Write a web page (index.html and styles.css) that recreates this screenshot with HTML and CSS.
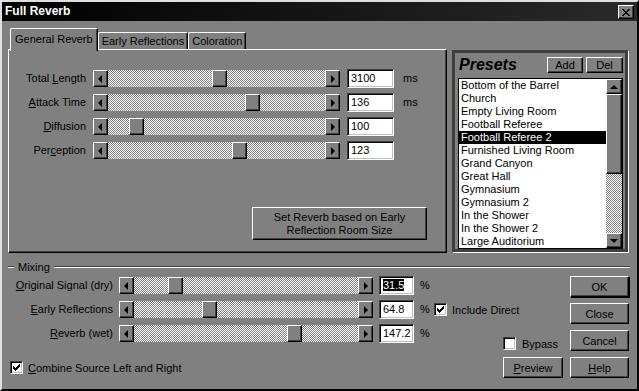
FILE: index.html
```html
<!DOCTYPE html>
<html lang="en">
<head>
    <meta charset="UTF-8">
    <title>Full Reverb</title>
    <link rel="stylesheet" href="styles.css">
</head>
<body>

<div class="window">
    <!-- title bar -->
    <div class="titlebar">
        <span class="title">Full Reverb</span>
        <button class="close-button" aria-label="Close">
            <svg width="8" height="7" viewBox="0 0 8 7" shape-rendering="crispEdges"><path d="M0 0h2v1H0zM6 0h2v1H6zM1 1h2v1H1zM5 1h2v1H5zM2 2h4v1H2zM3 3h2v1H3zM2 4h4v1H2zM1 5h2v1H1zM5 5h2v1H5zM0 6h2v1H0zM6 6h2v1H6z"/></svg>
        </button>
    </div>

    <div class="top">
        <!-- tabs -->
        <div class="tabs-area">
            <div class="tabs">
                <div class="tab active">General Reverb</div>
                <div class="tab">Early Reflections</div>
                <div class="tab">Coloration</div>
            </div>
            <div class="tab-panel">
                <div class="params">
                    <label class="param-label">Total <u>L</u>ength</label>
                    <div class="slider">
                        <span class="arrow-btn left"></span>
                        <span class="track"><span class="thumb" style="left: 104px"></span></span>
                        <span class="arrow-btn right"></span>
                    </div>
                    <div class="field">3100</div>
                    <span class="unit">ms</span>

                    <label class="param-label"><u>A</u>ttack Time</label>
                    <div class="slider">
                        <span class="arrow-btn left"></span>
                        <span class="track"><span class="thumb" style="left: 137px"></span></span>
                        <span class="arrow-btn right"></span>
                    </div>
                    <div class="field">136</div>
                    <span class="unit">ms</span>

                    <label class="param-label"><u>D</u>iffusion</label>
                    <div class="slider">
                        <span class="arrow-btn left"></span>
                        <span class="track"><span class="thumb" style="left: 21px"></span></span>
                        <span class="arrow-btn right"></span>
                    </div>
                    <div class="field">100</div>
                    <span class="unit"></span>

                    <label class="param-label">Per<u>c</u>eption</label>
                    <div class="slider">
                        <span class="arrow-btn left"></span>
                        <span class="track"><span class="thumb" style="left: 124px"></span></span>
                        <span class="arrow-btn right"></span>
                    </div>
                    <div class="field">123</div>
                    <span class="unit"></span>
                </div>
                <button class="btn set-reverb">Set Reverb based on Early<br>Reflection Room Size</button>
            </div>
        </div>

        <!-- presets -->
        <div class="presets">
            <div class="presets-head">
                <span class="presets-title">Presets</span>
                <button class="btn small add">Add</button>
                <button class="btn small del">Del</button>
            </div>
            <div class="listbox">
                <ul class="list">
                    <li>Bottom of the Barrel</li>
                    <li>Church</li>
                    <li>Empty Living Room</li>
                    <li>Football Referee</li>
                    <li class="selected">Football Referee 2</li>
                    <li>Furnished Living Room</li>
                    <li>Grand Canyon</li>
                    <li>Great Hall</li>
                    <li>Gymnasium</li>
                    <li>Gymnasium 2</li>
                    <li>In the Shower</li>
                    <li>In the Shower 2</li>
                    <li>Large Auditorium</li>
                </ul>
                <div class="vscroll">
                    <span class="scroll-btn up"></span>
                    <span class="scroll-thumb"></span>
                    <span class="scroll-track"></span>
                    <span class="scroll-btn down"></span>
                </div>
            </div>
        </div>
    </div>

    <!-- mixing -->
    <div class="mixing">
        <div class="group-title"><span>Mixing</span></div>
        <div class="mix-body">
            <div class="mix-left">
                <div class="mix-grid">
                    <label class="param-label"><u>O</u>riginal Signal (dry)</label>
                    <div class="slider">
                        <span class="arrow-btn left"></span>
                        <span class="track"><span class="thumb" style="left: 34px"></span></span>
                        <span class="arrow-btn right"></span>
                    </div>
                    <div class="field"><span class="selection">31.5</span></div>
                    <span class="unit">%</span>
                    <span></span>

                    <label class="param-label"><u>E</u>arly Reflections</label>
                    <div class="slider">
                        <span class="arrow-btn left"></span>
                        <span class="track"><span class="thumb" style="left: 68px"></span></span>
                        <span class="arrow-btn right"></span>
                    </div>
                    <div class="field">64.8</div>
                    <span class="unit">%</span>
                    <label class="check-row">
                        <span class="checkbox checked"></span>Include Direct
                    </label>

                    <label class="param-label"><u>R</u>everb (wet)</label>
                    <div class="slider">
                        <span class="arrow-btn left"></span>
                        <span class="track"><span class="thumb" style="left: 153px"></span></span>
                        <span class="arrow-btn right"></span>
                    </div>
                    <div class="field">147.2</div>
                    <span class="unit">%</span>
                    <span></span>
                </div>
                <label class="check-row combine">
                    <span class="checkbox checked"></span><span><u>C</u>ombine Source Left and Right</span>
                </label>
            </div>

            <div class="mix-right">
                <div class="side-col">
                    <label class="check-row bypass">
                        <span class="checkbox"></span>Bypass
                    </label>
                    <button class="btn action"><u>P</u>review</button>
                </div>
                <div class="btn-col">
                    <button class="btn action default">OK</button>
                    <button class="btn action">Close</button>
                    <button class="btn action">Cancel</button>
                    <button class="btn action"><u>H</u>elp</button>
                </div>
            </div>
        </div>
    </div>
</div>

</body>
</html>
```

FILE: styles.css
```css
/* page */
body {
    margin: 0;
    background: #808080;
    font-family: "Liberation Sans", Arial, sans-serif;
    font-size: 11px;
    color: #000;
    overflow: hidden;
}

u {
    text-decoration-thickness: 1px;
    text-underline-offset: 1px;
}

.window {
    width: 639px;
    height: 391px;
    box-sizing: border-box;
    border: 2px solid;
    border-color: #dfdfdf #000 #000 #dfdfdf;
    background: #808080;
}

/* title bar */
.titlebar {
    height: 19px;
    display: flex;
    align-items: flex-start;
    background: linear-gradient(to right, #000, #2a2a2a);
    padding-left: 3px;
}

.title {
    font: bold 12px "Liberation Sans", Arial, sans-serif;
    color: #fff;
    line-height: 19px;
}

.close-button {
    margin: 3px 3px 0 auto;
    width: 16px;
    height: 14px;
    padding: 0;
    box-sizing: border-box;
    background: #808080;
    border: 1px solid;
    border-color: #fff #000 #000 #fff;
    box-shadow: inset -1px -1px #404040;
    display: flex;
    align-items: center;
    justify-content: center;
}

/* 3d bevels */
.btn, .arrow-btn, .thumb, .scroll-btn, .scroll-thumb {
    background: #808080;
    box-sizing: border-box;
    border: 1px solid;
    border-color: #fff #000 #000 #fff;
    box-shadow: inset -1px -1px #404040;
}

.btn {
    font: inherit;
    color: #000;
    padding: 0;
    cursor: pointer;
}

/* top area */
.top {
    display: flex;
    padding: 7px 0 0 6px;
}

.tabs-area {
    width: 439px;
}

.tabs {
    display: flex;
    align-items: flex-end;
    height: 21px;
    padding-left: 2px;
}

.tab {
    height: 17px;
    box-sizing: border-box;
    border: 1px solid;
    border-color: #fff #000 transparent #fff;
    border-bottom: none;
    border-radius: 2px 2px 0 0;
    box-shadow: inset -1px 0 #404040;
    padding: 0 3px;
    line-height: 17px;
    white-space: nowrap;
}

.tab.active {
    height: 23px;
    margin-bottom: -2px;
    position: relative;
    z-index: 1;
    background: #808080;
    padding: 0 4px;
    line-height: 20px;
}

.tab-panel {
    height: 204px;
    box-sizing: border-box;
    border: 1px solid;
    border-color: #fff #000 #000 #fff;
    box-shadow: inset -1px -1px #404040;
    padding-top: 19px;
}

.params {
    display: grid;
    grid-template-columns: 77px 247px 47px auto;
    grid-auto-rows: 19px;
    column-gap: 7px;
    row-gap: 5px;
}

.param-label {
    text-align: right;
    line-height: 19px;
    white-space: nowrap;
}

.unit {
    line-height: 19px;
    margin-left: 2px;
}

/* slider */
.slider {
    display: flex;
    height: 17px;
    align-self: center;
}

.arrow-btn {
    width: 15px;
    height: 17px;
    display: flex;
    align-items: center;
    justify-content: center;
}

.arrow-btn::after {
    content: "";
    border-top: 4px solid transparent;
    border-bottom: 4px solid transparent;
}

.arrow-btn.left::after {
    border-right: 4px solid #000;
    margin-right: 1px;
}

.arrow-btn.right::after {
    border-left: 4px solid #000;
}

.track {
    flex: 1;
    position: relative;
    background-image: repeating-conic-gradient(#fff 0 25%, #808080 0 50%);
    background-size: 2px 2px;
}

.thumb {
    position: absolute;
    top: 0;
    width: 15px;
    height: 17px;
}

/* text fields */
.field {
    height: 19px;
    box-sizing: border-box;
    background: #fff;
    border: 1px solid;
    border-color: #404040 #fff #fff #404040;
    box-shadow: inset 1px 1px #000, inset -1px -1px #c0c0c0;
    padding-left: 3px;
    line-height: 17px;
}

.selection {
    background: #000;
    color: #fff;
}

.set-reverb {
    display: block;
    width: 175px;
    height: 33px;
    margin: 47px 19px 0 auto;
    line-height: 13px;
}

/* presets */
.presets {
    width: 176px;
    height: 202px;
    box-sizing: border-box;
    margin: 22px 0 0 5px;
    border: 3px solid #404040;
    box-shadow: 1px 1px #fff;
    padding: 4px 2px 0 3px;
}

.presets-head {
    display: flex;
    align-items: center;
    height: 16px;
    gap: 3px;
}

.presets-title {
    font: italic bold 16px "Liberation Sans", Arial, sans-serif;
    margin: 0 auto 0 1px;
}

.btn.small {
    height: 16px;
    line-height: 14px;
}

.add {
    width: 36px;
}

.del {
    width: 37px;
}

.listbox {
    display: flex;
    margin-top: 5px;
    height: 171px;
    box-sizing: border-box;
    border: 1px solid #000;
    background: #fff;
}

.list {
    flex: 1;
    margin: 0;
    padding: 0;
    list-style: none;
    overflow: hidden;
}

.list li {
    height: 13px;
    line-height: 13px;
    padding-left: 2px;
    white-space: nowrap;
}

.list li.selected {
    background: #000;
    color: #fff;
}

.vscroll {
    width: 16px;
    display: flex;
    flex-direction: column;
}

.scroll-btn {
    height: 15px;
    display: flex;
    align-items: center;
    justify-content: center;
}

.scroll-btn::after {
    content: "";
    border-left: 4px solid transparent;
    border-right: 4px solid transparent;
}

.scroll-btn.up::after {
    border-bottom: 4px solid #000;
}

.scroll-btn.down::after {
    border-top: 4px solid #000;
}

.scroll-thumb {
    height: 80px;
}

.scroll-track {
    flex: 1;
    background-image: repeating-conic-gradient(#fff 0 25%, #808080 0 50%);
    background-size: 2px 2px;
}

/* mixing */
.mixing {
    padding: 8px 0 0 6px;
}

.group-title {
    display: flex;
    align-items: center;
    height: 12px;
    margin-right: 7px;
}

.group-title span {
    margin: 0 4px;
}

.group-title::before, .group-title::after {
    content: "";
    border-top: 1px solid #404040;
    border-bottom: 1px solid #fff;
}

.group-title::before {
    width: 6px;
}

.group-title::after {
    flex: 1;
}

.mix-body {
    display: flex;
    margin-top: 3px;
}

.mix-left {
    flex: 1;
    min-width: 0;
}

.mix-grid {
    display: grid;
    grid-template-columns: 105px 254px 35px 8px auto;
    grid-auto-rows: 19px;
    column-gap: 6px;
    row-gap: 5px;
}

.mix-grid .unit {
    margin-left: 0;
}

.check-row {
    display: flex;
    align-items: center;
    gap: 5px;
    white-space: nowrap;
}

.checkbox {
    flex: none;
    width: 13px;
    height: 13px;
    box-sizing: border-box;
    background: #fff;
    border: 1px solid;
    border-color: #404040 #fff #fff #404040;
    box-shadow: inset 1px 1px #000, inset -1px -1px #c0c0c0;
    display: flex;
    align-items: center;
    justify-content: center;
}

.checkbox.checked::after {
    content: "";
    width: 7px;
    height: 7px;
    background: url("data:image/svg+xml,%3Csvg xmlns='http://www.w3.org/2000/svg' width='7' height='7' shape-rendering='crispEdges'%3E%3Cpath d='M6 0h1v1H6zM5 1h2v1H5zM0 2h1v1H0zM4 2h3v1H4zM0 3h2v1H0zM3 3h3v1H3zM0 4h5v1H0zM1 5h3v1H1zM2 6h1v1H2z'/%3E%3C/svg%3E") no-repeat;
}

.combine {
    margin: 18px 0 0 2px;
}

.mix-right {
    flex: none;
    margin-right: 8px;
    display: flex;
    gap: 7px;
}

.side-col {
    width: 60px;
    display: flex;
    flex-direction: column;
    justify-content: flex-end;
    gap: 7px;
}

.bypass {
    gap: 6px;
}

.btn-col {
    width: 59px;
    display: flex;
    flex-direction: column;
    gap: 6px;
}

.btn.action {
    height: 21px;
    width: 100%;
}

.btn.default {
    box-shadow: inset -1px -1px #404040, 1px 1px #000;
}
```
